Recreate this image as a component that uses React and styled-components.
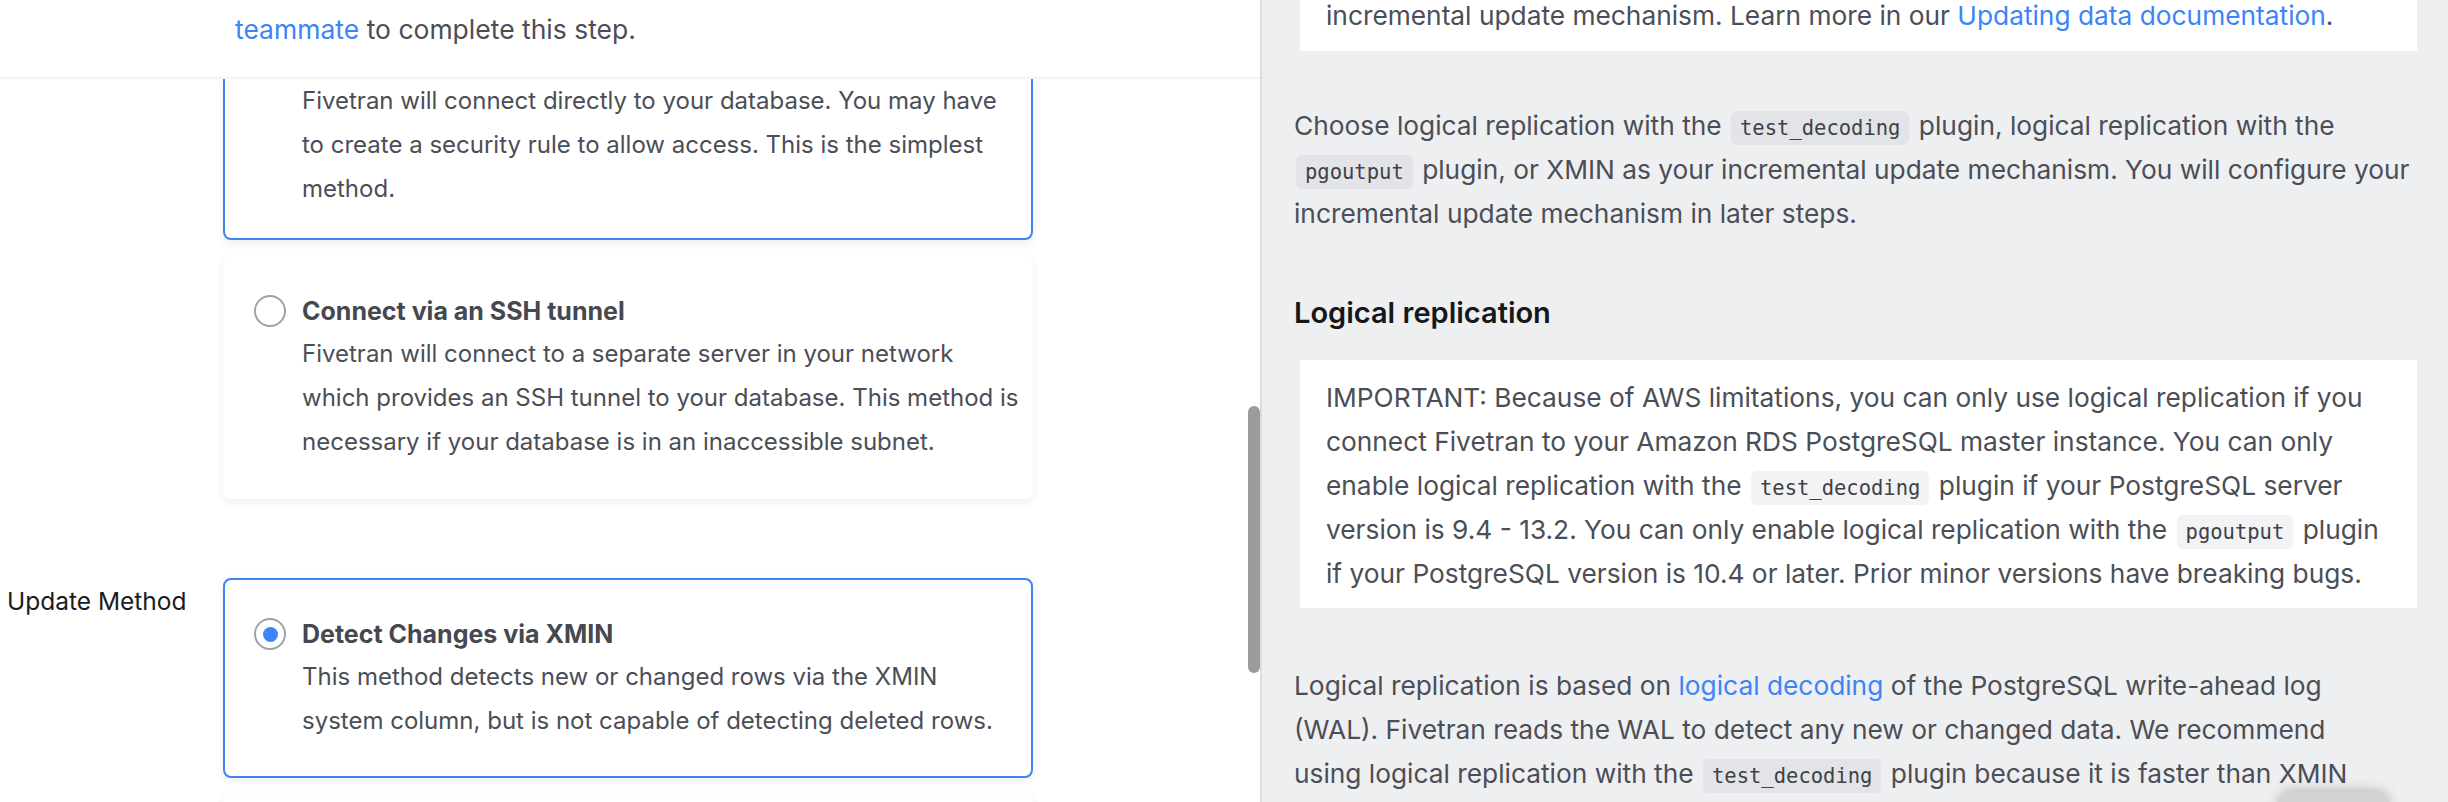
import React from "react"
import styled, { createGlobalStyle } from "styled-components"

const GlobalStyle = createGlobalStyle`
    html, body { margin: 0; padding: 0; }
    body {
        font-family: Inter, "Open Sans", "Noto Sans", sans-serif;
        color: #4b4e56;
        background: #ffffff;
    }
`

const Radio = ({ checked }) => (
    <RadioRing>
        {checked && <RadioDot />}
    </RadioRing>
)

const OptionCard = ({ checked, clipped, title, children }) => (
    <Card $checked={checked} $clipped={clipped}>
        {clipped ? <span /> : <Radio checked={checked} />}
        <div>
            {title && <CardTitle>{title}</CardTitle>}
            <CardText>{children}</CardText>
        </div>
    </Card>
)

const App = () => {
    return (
        <Page>
            <GlobalStyle />
            <LeftPane>
                <StepHeader>
                    <Link>teammate</Link> to complete this step.
                </StepHeader>
                <FormBody>
                    <FieldRow>
                        <FieldLabel />
                        <CardStack>
                            <OptionCard checked clipped>
                                Fivetran will connect directly to your database. You may have<br />
                                to create a security rule to allow access. This is the simplest<br />
                                method.
                            </OptionCard>
                            <OptionCard title="Connect via an SSH tunnel">
                                Fivetran will connect to a separate server in your network<br />
                                which provides an SSH tunnel to your database. This method is<br />
                                necessary if your database is in an inaccessible subnet.
                            </OptionCard>
                        </CardStack>
                    </FieldRow>
                    <FieldRow $spaced>
                        <FieldLabel>Update Method</FieldLabel>
                        <CardStack>
                            <OptionCard checked title="Detect Changes via XMIN">
                                This method detects new or changed rows via the XMIN<br />
                                system column, but is not capable of detecting deleted rows.
                            </OptionCard>
                            <OptionCard title="Logical replication">
                                Fivetran will read the write-ahead log of your database.
                            </OptionCard>
                        </CardStack>
                    </FieldRow>
                </FormBody>
                <ScrollThumb />
            </LeftPane>

            <DocsPane>
                <Note $first>
                    incremental update mechanism. Learn more in our <Link>Updating data documentation</Link>.
                </Note>
                <Para>
                    Choose logical replication with the <Code>test_decoding</Code> plugin, logical replication with the<br />
                    <Code>pgoutput</Code> plugin, or XMIN as your incremental update mechanism. You will configure your<br />
                    incremental update mechanism in later steps.
                </Para>
                <Heading>Logical replication</Heading>
                <Note>
                    IMPORTANT: Because of AWS limitations, you can only use logical replication if you<br />
                    connect Fivetran to your Amazon RDS PostgreSQL master instance. You can only<br />
                    enable logical replication with the <Code $light>test_decoding</Code> plugin if your PostgreSQL server<br />
                    version is 9.4 - 13.2. You can only enable logical replication with the <Code $light>pgoutput</Code> plugin<br />
                    if your PostgreSQL version is 10.4 or later. Prior minor versions have breaking bugs.
                </Note>
                <Para $gap={56}>
                    Logical replication is based on <Link>logical decoding</Link> of the PostgreSQL write-ahead log<br />
                    (WAL). Fivetran reads the WAL to detect any new or changed data. We recommend<br />
                    using logical replication with the <Code>test_decoding</Code> plugin because it is faster than XMIN
                </Para>
                <FloatingButton />
            </DocsPane>
        </Page>
    )
}

const Page = styled.div`
    display: grid;
    grid-template-columns: 1260px 1fr;
    width: 100vw;
    height: 100vh;
    overflow: hidden;
`

const LeftPane = styled.div`
    position: relative;
    display: flex;
    flex-direction: column;
    background: #ffffff;
    overflow: hidden;
`

const StepHeader = styled.div`
    flex: none;
    height: 79px;
    box-sizing: border-box;
    padding: 7px 0 0 235px;
    font-size: 26.5px;
    line-height: 44px;
    color: #4b4e56;
    border-bottom: 2px solid #f3f4f6;
    position: relative;
    z-index: 1;
    background: #ffffff;
`

const Link = styled.a`
    color: #3d84f7;
    text-decoration: none;
    cursor: pointer;
`

const FormBody = styled.div`
    display: flex;
    flex-direction: column;
`

const FieldRow = styled.div`
    display: grid;
    grid-template-columns: 223px 810px;
    margin-top: ${(p) => (p.$spaced ? "79px" : "0")};
`

const FieldLabel = styled.div`
    padding: 5px 0 0 7px;
    font-size: 24.5px;
    line-height: 36px;
    color: #1b1c1f;
`

const CardStack = styled.div`
    display: flex;
    flex-direction: column;
    gap: 15px;
`

const Card = styled.div`
    display: grid;
    grid-template-columns: 32px 1fr;
    column-gap: 16px;
    padding: ${(p) => (p.$clipped ? "0 20px 27px 29px" : "33px 20px 33px 29px")};
    background: #ffffff;
    border: 2px solid ${(p) => (p.$checked ? "#3d84f7" : "transparent")};
    border-top-width: ${(p) => (p.$clipped ? "0" : "2px")};
    border-radius: ${(p) => (p.$clipped ? "0 0 8px 8px" : "8px")};
    box-shadow: 0 3px 10px rgba(30, 40, 70, 0.08);
`

const RadioRing = styled.span`
    box-sizing: border-box;
    width: 32px;
    height: 32px;
    margin-top: 5px;
    border: 2px solid #9aa2ae;
    border-radius: 50%;
    display: flex;
    align-items: center;
    justify-content: center;
`

const RadioDot = styled.span`
    width: 15px;
    height: 15px;
    border-radius: 50%;
    background: #3d84f7;
`

const CardTitle = styled.div`
    font-size: 25px;
    font-weight: 700;
    line-height: 42px;
    color: #45484f;
`

const CardText = styled.div`
    font-size: 24px;
    line-height: 44px;
    color: #4b4e56;
    white-space: nowrap;
`

const ScrollThumb = styled.div`
    position: absolute;
    top: 406px;
    right: 0;
    width: 12px;
    height: 267px;
    border-radius: 6px;
    background: #9c9c9c;
`

const DocsPane = styled.div`
    position: relative;
    display: flex;
    flex-direction: column;
    align-items: flex-start;
    padding: 0 31px 0 32px;
    background: #eeeff1;
    border-left: 2px solid #dcdde0;
    overflow: hidden;
    font-size: 26.3px;
    line-height: 44px;
    color: #4b4e56;
`

const Note = styled.div`
    align-self: stretch;
    margin: ${(p) => (p.$first ? "-6px 0 0 6px" : "0 0 0 6px")};
    padding: ${(p) => (p.$first ? "0 26px 13px" : "16px 26px 12px")};
    background: #ffffff;
    white-space: nowrap;
`

const Para = styled.p`
    margin: ${(p) => p.$gap || 53}px 0 0;
    white-space: nowrap;
`

const Heading = styled.h3`
    margin: 57px 0 27px;
    font-size: 29px;
    font-weight: 600;
    line-height: 40px;
    color: #16171a;
`

const Code = styled.code`
    display: inline-block;
    padding: 0 9px;
    margin: 0 2px;
    line-height: 34px;
    border-radius: 6px;
    font-family: "DejaVu Sans Mono", "Liberation Mono", monospace;
    font-size: 20.5px;
    color: #3e4148;
    background: ${(p) => (p.$light ? "#f3f3f5" : "#e3e4e7")};
`

const FloatingButton = styled.div`
    position: absolute;
    right: 61px;
    bottom: -40px;
    width: 107px;
    height: 50px;
    border-radius: 10px;
    background: #d4d4d6;
    box-shadow: 0 0 14px rgba(0, 0, 0, 0.3);
`

export default App
